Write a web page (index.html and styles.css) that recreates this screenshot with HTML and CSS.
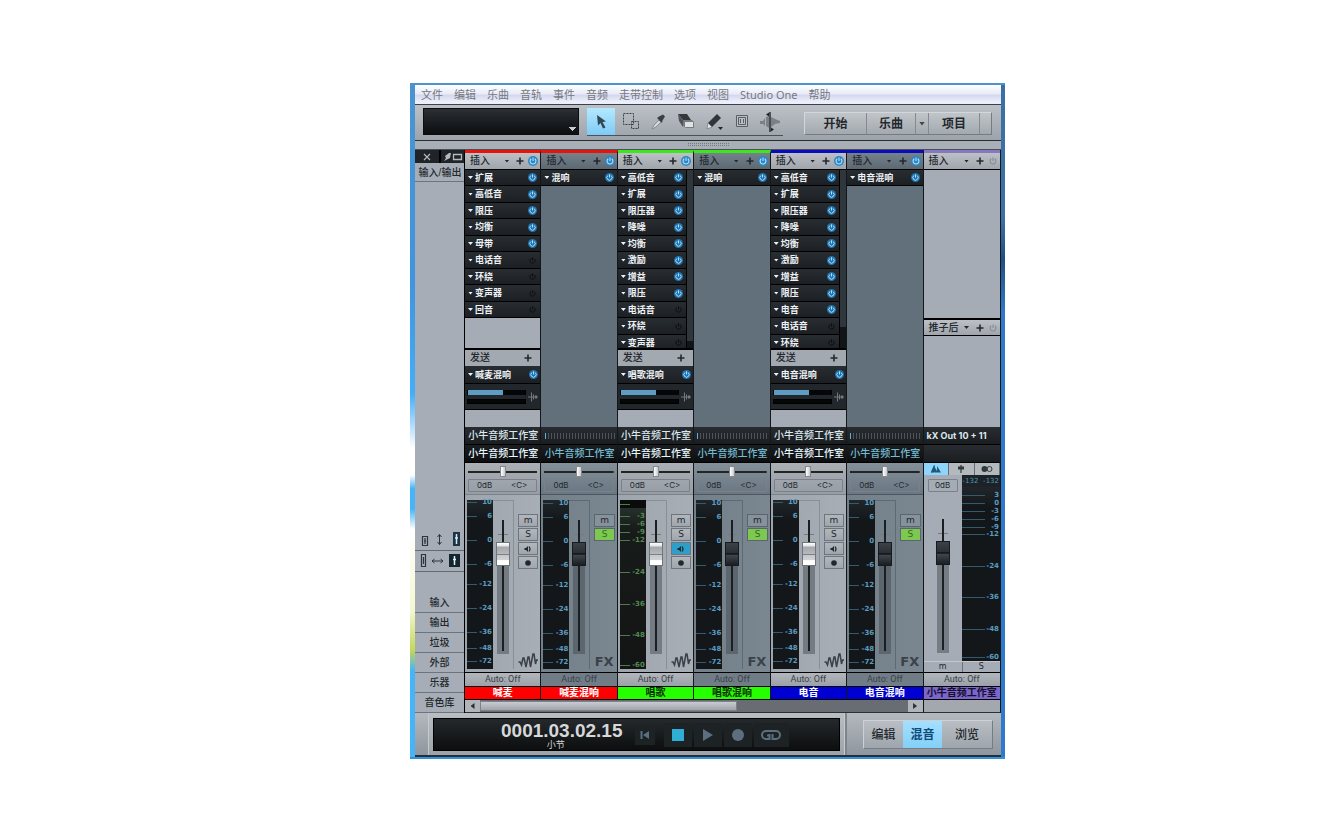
FILE: index.html
```html
<!DOCTYPE html>
<html lang="zh-CN">
<head>
<meta charset="utf-8">
<title>Studio One</title>
<link rel="stylesheet" href="styles.css">
</head>
<body>
<svg class="defs" aria-hidden="true">
  <symbol id="pw" viewBox="0 0 10 10"><path d="M3.200 2.800A2.900 2.900 0 1 0 6.800 2.800M5 1.500v3.500" fill="none" stroke="currentColor" stroke-width="1.100"/></symbol>
  <symbol id="plus" viewBox="0 0 8 8"><path d="M4 0.5v7M0.5 4h7" stroke="currentColor" stroke-width="1.6"/></symbol>
  <symbol id="route" viewBox="0 0 10 10"><path d="M0 5h10M3.500 0.500v9M5.500 2.500v5" stroke="currentColor" fill="none"/><path d="M7 3.500h2v3h-2z" fill="currentColor"/></symbol>
  <symbol id="mon" viewBox="0 0 8 8"><path d="M0.500 3h1.500l2-2v6l-2-2h-1.500z" fill="currentColor"/><path d="M5 1.500q2 2.500 0 5" fill="none" stroke="currentColor" stroke-width="1.200"/></symbol>
  <symbol id="rec" viewBox="0 0 8 8"><circle cx="4" cy="4" r="2.800" fill="currentColor"/></symbol>
  <symbol id="wave" viewBox="0 0 20 16"><path d="M0.500 9h1.500l1.500 3 1.500-7h1l2 9 2-10h1l1.500 10 2.500-13h1l1.500 10 1-4h2" fill="none" stroke="currentColor" stroke-width="1.500"/></symbol>
</svg>
<main class="window">
  <nav class="menu">
    <a href="#">文件</a><a href="#">编辑</a><a href="#">乐曲</a><a href="#">音轨</a><a href="#">事件</a><a href="#">音频</a><a href="#">走带控制</a><a href="#">选项</a><a href="#">视图</a><a href="#">Studio One</a><a href="#">帮助</a>
  </nav>

  <header class="toolbar">
    <select class="display" aria-label="参数"><option></option></select>
    <div class="tools">
      <button class="active" aria-label="箭头"><svg viewBox="0 0 20 20"><path d="M6 3l9 6.500-3.500.5 3 5.500-2.500 1-2.500-5.500-2.500 2.500z" fill="#2f4654"/></svg></button>
      <button aria-label="范围"><svg viewBox="0 0 20 20"><path d="M3.500 1.500h10v11h-10zM11.500 9.500h7v7h-7z" fill="none" stroke="#3c4146" stroke-dasharray="2 1"/></svg></button>
      <button aria-label="分割"><svg viewBox="0 0 20 20"><path d="M4 17l2-4 5-5 2 2-5 5z" fill="#d3d7da" stroke="#777c81" stroke-width=".8"/><path d="M9 6l5 5 .5-2.500 2.500-4-2-2-4 2z" fill="#3b4045"/></svg></button>
      <button aria-label="橡皮擦"><svg viewBox="0 0 20 20"><path d="M2 2h9l4 6H7z" fill="#34383c"/><path d="M2 2l5 6v7L3 9z" fill="#4f5459"/><path d="M7 8h9l2 2v6H10l-3-2z" fill="#777c81"/><path d="M9 10h8v5H9z" fill="#e0e2e4"/></svg></button>
      <button aria-label="绘图"><svg viewBox="0 0 20 20"><path d="M4 11l9-9 4 4-9 9z" fill="#30353a"/><path d="M4 11l4 4-5 2z" fill="#e3e5e7" stroke="#666" stroke-width=".6"/><path d="M14 15h5l-2.500 3z" fill="#22262a"/></svg></button>
      <button aria-label="静音"><svg viewBox="0 0 20 20"><path d="M4.500 3.500h11v11h-11z" fill="#b9bec3" stroke="#5a5f65"/><path d="M6.500 5.500h7v7h-7zM8.500 7v4M11.500 7v4" fill="none" stroke="#5a5f65"/></svg></button>
      <button aria-label="弯曲"><svg viewBox="0 0 20 20"><path d="M0 9h3l2-3v8l-2-2H0zM6 5l3-1v12l-3-2zM11 5l4 2 5 2v2l-5 1-4 3z" fill="#7b8086"/><path d="M10 0v20" stroke="#202428" stroke-width="1.400"/><path d="M6 2.500l3-2v4zM14 17.500l-3-2v4z" fill="#202428"/></svg></button>
    </div>
    <div class="pages">
      <button class="p-start">开始</button><button class="p-song">乐曲</button><button class="p-drop" aria-label="乐曲列表"><i class="tri"></i></button><button class="p-project">项目</button><button class="p-end" aria-label="更多"></button>
    </div>
  </header>
  <div class="splitter"><i></i></div>

  <section class="mixer">
    <aside class="side">
      <div class="side-top">
        <button aria-label="关闭"><svg viewBox="0 0 8 8"><path d="M1 1l6 6M7 1L1 7" stroke="currentColor" stroke-width="1.200"/></svg></button>
        <button aria-label="分离"><svg class="wide" viewBox="0 0 20 10"><path d="M1 9l2-3-1-2 4-3h2l-1 5-2 1z" fill="currentColor"/><path d="M10.500 2.500h8v5h-8z" fill="none" stroke="currentColor" stroke-width="1.300"/></svg></button>
      </div>
      <button class="io">输入/输出</button>
      <div class="side-mid">
        <button aria-label="高度"><svg viewBox="0 0 42 16"><path d="M3.500 4.500h5v9h-5zM6 6v6M5 9h2" fill="none" stroke="#30353a" stroke-width="1.200"/><path d="M20.500 2.500v10M18.500 5l2-2.500 2 2.500M18.500 10l2 2.500 2-2.500" fill="none" stroke="#30353a"/><path d="M34 0h7v14h-7z" fill="#1d3445"/><path d="M37.500 2v10M36 6h3" stroke="#d6eaf5" stroke-width="1.500"/></svg></button>
        <button aria-label="宽度"><svg viewBox="0 0 42 16"><path d="M2.500 1.500h4v12h-4zM4.500 4v7M4 6.500h1" fill="none" stroke="#30353a" stroke-width="1.200"/><path d="M13 8h11M15.500 6L13 8l2.500 2M21.500 6L24 8l-2.500 2" fill="none" stroke="#30353a"/><path d="M30 1h11v13H30z" fill="#13262f"/><path d="M35.500 3v9M34 6.500h3" stroke="#e0f0f5" stroke-width="1.500"/></svg></button>
      </div>
      <div class="side-tabs">
        <button>输入</button><button>输出</button><button>垃圾</button><button>外部</button><button>乐器</button><button>音色库</button>
      </div>
    </aside>

    <div class="rack">
      <article class="ch red">
        <h2 class="head">插入<i class="tri"></i><button aria-label="添加"><svg><use href="#plus"/></svg></button><button class="on" aria-label="旁通"><svg><use href="#pw"/></svg></button></h2>
        <div class="upper">
          <ul class="plugs">
            <li>扩展<button class="on" aria-label="扩展"><svg><use href="#pw"/></svg></button></li>
            <li>高低音<button class="on" aria-label="高低音"><svg><use href="#pw"/></svg></button></li>
            <li>限压<button class="on" aria-label="限压"><svg><use href="#pw"/></svg></button></li>
            <li>均衡<button class="on" aria-label="均衡"><svg><use href="#pw"/></svg></button></li>
            <li>母带<button class="on" aria-label="母带"><svg><use href="#pw"/></svg></button></li>
            <li>电话音<button aria-label="电话音"><svg><use href="#pw"/></svg></button></li>
            <li>环绕<button aria-label="环绕"><svg><use href="#pw"/></svg></button></li>
            <li>变声器<button aria-label="变声器"><svg><use href="#pw"/></svg></button></li>
            <li>回音<button aria-label="回音"><svg><use href="#pw"/></svg></button></li>
          </ul>
        </div>
        <h3 class="send-head">发送<button aria-label="添加发送"><svg><use href="#plus"/></svg></button></h3>
        <ul class="plugs send"><li>喊麦混响<button class="on" aria-label="喊麦混响"><svg><use href="#pw"/></svg></button></li></ul>
        <div class="levels"><div><i class="bar lit"></i><i class="bar"></i></div><svg><use href="#route"/></svg></div>
        <div class="blank"></div>
        <div class="route">小牛音频工作室</div><div class="route black">小牛音频工作室</div>
        <div class="pan"><input type="range" aria-label="声像"><div class="vals"><span>0dB</span><span>&lt;C&gt;</span></div></div>
        <div class="strip">
          <ol class="scale"><li>10</li><li>6</li><li>0</li><li>-6</li><li>-12</li><li>-24</li><li>-36</li><li>-48</li><li>-72</li></ol>
          <div class="lane"><input class="fader" type="range" value="80" aria-label="音量"></div>
          <div class="keys"><button>m</button><button>S</button><button aria-label="监听"><svg><use href="#mon"/></svg></button><button aria-label="录音"><svg><use href="#rec"/></svg></button><svg class="kind"><use href="#wave"/></svg></div>
        </div>
        <div class="auto">Auto: Off</div>
        <div class="name">喊麦</div>
      </article>

      <article class="ch fx red">
        <h2 class="head">插入<i class="tri"></i><button aria-label="添加"><svg><use href="#plus"/></svg></button><button class="on" aria-label="旁通"><svg><use href="#pw"/></svg></button></h2>
        <div class="upper"><ul class="plugs"><li>混响<button class="on" aria-label="混响"><svg><use href="#pw"/></svg></button></li></ul></div>
        <div class="route"><i class="ticks"></i></div><div class="route black">小牛音频工作室</div>
        <div class="pan"><input type="range" aria-label="声像"><div class="vals"><span>0dB</span><span>&lt;C&gt;</span></div></div>
        <div class="strip">
          <ol class="scale"><li>10</li><li>6</li><li>0</li><li>-6</li><li>-12</li><li>-24</li><li>-36</li><li>-48</li><li>-72</li></ol>
          <div class="lane"><input class="fader" type="range" value="80" aria-label="音量"></div>
          <div class="keys"><button>m</button><button class="solo">S</button><b class="kind">FX</b></div>
        </div>
        <div class="auto">Auto: Off</div>
        <div class="name">喊麦混响</div>
      </article>

      <article class="ch green">
        <h2 class="head">插入<i class="tri"></i><button aria-label="添加"><svg><use href="#plus"/></svg></button><button class="on" aria-label="旁通"><svg><use href="#pw"/></svg></button></h2>
        <div class="upper">
          <ul class="plugs">
            <li>高低音<button class="on" aria-label="高低音"><svg><use href="#pw"/></svg></button></li>
            <li>扩展<button class="on" aria-label="扩展"><svg><use href="#pw"/></svg></button></li>
            <li>限压器<button class="on" aria-label="限压器"><svg><use href="#pw"/></svg></button></li>
            <li>降噪<button class="on" aria-label="降噪"><svg><use href="#pw"/></svg></button></li>
            <li>均衡<button class="on" aria-label="均衡"><svg><use href="#pw"/></svg></button></li>
            <li>激励<button class="on" aria-label="激励"><svg><use href="#pw"/></svg></button></li>
            <li>增益<button class="on" aria-label="增益"><svg><use href="#pw"/></svg></button></li>
            <li>限压<button class="on" aria-label="限压"><svg><use href="#pw"/></svg></button></li>
            <li>电话音<button aria-label="电话音"><svg><use href="#pw"/></svg></button></li>
            <li>环绕<button aria-label="环绕"><svg><use href="#pw"/></svg></button></li>
            <li>变声器<button aria-label="变声器"><svg><use href="#pw"/></svg></button></li>
          </ul>
          <div class="vbar"><i class="long"></i></div>
        </div>
        <h3 class="send-head">发送<button aria-label="添加发送"><svg><use href="#plus"/></svg></button></h3>
        <ul class="plugs send"><li>唱歌混响<button class="on" aria-label="唱歌混响"><svg><use href="#pw"/></svg></button></li></ul>
        <div class="levels"><div><i class="bar lit"></i><i class="bar"></i></div><svg><use href="#route"/></svg></div>
        <div class="blank"></div>
        <div class="route">小牛音频工作室</div><div class="route black">小牛音频工作室</div>
        <div class="pan"><input type="range" aria-label="声像"><div class="vals"><span>0dB</span><span>&lt;C&gt;</span></div></div>
        <div class="strip">
          <ol class="scale input"><li></li><li>-3</li><li>-6</li><li>-9</li><li>-12</li><li>-24</li><li>-36</li><li>-48</li><li>-60</li></ol>
          <div class="lane"><input class="fader" type="range" value="80" aria-label="音量"></div>
          <div class="keys"><button>m</button><button>S</button><button class="listen" aria-label="监听"><svg><use href="#mon"/></svg></button><button aria-label="录音"><svg><use href="#rec"/></svg></button><svg class="kind"><use href="#wave"/></svg></div>
        </div>
        <div class="auto">Auto: Off</div>
        <div class="name">唱歌</div>
      </article>

      <article class="ch fx green">
        <h2 class="head">插入<i class="tri"></i><button aria-label="添加"><svg><use href="#plus"/></svg></button><button class="on" aria-label="旁通"><svg><use href="#pw"/></svg></button></h2>
        <div class="upper"><ul class="plugs"><li>混响<button class="on" aria-label="混响"><svg><use href="#pw"/></svg></button></li></ul></div>
        <div class="route"><i class="ticks"></i></div><div class="route black">小牛音频工作室</div>
        <div class="pan"><input type="range" aria-label="声像"><div class="vals"><span>0dB</span><span>&lt;C&gt;</span></div></div>
        <div class="strip">
          <ol class="scale"><li>10</li><li>6</li><li>0</li><li>-6</li><li>-12</li><li>-24</li><li>-36</li><li>-48</li><li>-72</li></ol>
          <div class="lane"><input class="fader" type="range" value="80" aria-label="音量"></div>
          <div class="keys"><button>m</button><button class="solo">S</button><b class="kind">FX</b></div>
        </div>
        <div class="auto">Auto: Off</div>
        <div class="name">唱歌混响</div>
      </article>

      <article class="ch blue">
        <h2 class="head">插入<i class="tri"></i><button aria-label="添加"><svg><use href="#plus"/></svg></button><button class="on" aria-label="旁通"><svg><use href="#pw"/></svg></button></h2>
        <div class="upper">
          <ul class="plugs">
            <li>高低音<button class="on" aria-label="高低音"><svg><use href="#pw"/></svg></button></li>
            <li>扩展<button class="on" aria-label="扩展"><svg><use href="#pw"/></svg></button></li>
            <li>限压器<button class="on" aria-label="限压器"><svg><use href="#pw"/></svg></button></li>
            <li>降噪<button class="on" aria-label="降噪"><svg><use href="#pw"/></svg></button></li>
            <li>均衡<button class="on" aria-label="均衡"><svg><use href="#pw"/></svg></button></li>
            <li>激励<button class="on" aria-label="激励"><svg><use href="#pw"/></svg></button></li>
            <li>增益<button class="on" aria-label="增益"><svg><use href="#pw"/></svg></button></li>
            <li>限压<button class="on" aria-label="限压"><svg><use href="#pw"/></svg></button></li>
            <li>电音<button class="on" aria-label="电音"><svg><use href="#pw"/></svg></button></li>
            <li>电话音<button aria-label="电话音"><svg><use href="#pw"/></svg></button></li>
            <li>环绕<button aria-label="环绕"><svg><use href="#pw"/></svg></button></li>
          </ul>
          <div class="vbar"><i></i></div>
        </div>
        <h3 class="send-head">发送<button aria-label="添加发送"><svg><use href="#plus"/></svg></button></h3>
        <ul class="plugs send"><li>电音混响<button class="on" aria-label="电音混响"><svg><use href="#pw"/></svg></button></li></ul>
        <div class="levels"><div><i class="bar lit"></i><i class="bar"></i></div><svg><use href="#route"/></svg></div>
        <div class="blank"></div>
        <div class="route">小牛音频工作室</div><div class="route black">小牛音频工作室</div>
        <div class="pan"><input type="range" aria-label="声像"><div class="vals"><span>0dB</span><span>&lt;C&gt;</span></div></div>
        <div class="strip">
          <ol class="scale"><li>10</li><li>6</li><li>0</li><li>-6</li><li>-12</li><li>-24</li><li>-36</li><li>-48</li><li>-72</li></ol>
          <div class="lane"><input class="fader" type="range" value="80" aria-label="音量"></div>
          <div class="keys"><button>m</button><button>S</button><button aria-label="监听"><svg><use href="#mon"/></svg></button><button aria-label="录音"><svg><use href="#rec"/></svg></button><svg class="kind"><use href="#wave"/></svg></div>
        </div>
        <div class="auto">Auto: Off</div>
        <div class="name">电音</div>
      </article>

      <article class="ch fx blue">
        <h2 class="head">插入<i class="tri"></i><button aria-label="添加"><svg><use href="#plus"/></svg></button><button class="on" aria-label="旁通"><svg><use href="#pw"/></svg></button></h2>
        <div class="upper"><ul class="plugs"><li>电音混响<button class="on" aria-label="电音混响"><svg><use href="#pw"/></svg></button></li></ul></div>
        <div class="route"><i class="ticks"></i></div><div class="route black">小牛音频工作室</div>
        <div class="pan"><input type="range" aria-label="声像"><div class="vals"><span>0dB</span><span>&lt;C&gt;</span></div></div>
        <div class="strip">
          <ol class="scale"><li>10</li><li>6</li><li>0</li><li>-6</li><li>-12</li><li>-24</li><li>-36</li><li>-48</li><li>-72</li></ol>
          <div class="lane"><input class="fader" type="range" value="80" aria-label="音量"></div>
          <div class="keys"><button>m</button><button class="solo">S</button><b class="kind">FX</b></div>
        </div>
        <div class="auto">Auto: Off</div>
        <div class="name">电音混响</div>
      </article>

      <article class="ch master violet">
        <h2 class="head">插入<i class="tri"></i><button aria-label="添加"><svg><use href="#plus"/></svg></button><button class="off" aria-label="旁通"><svg><use href="#pw"/></svg></button></h2>
        <div class="upper"></div>
        <h2 class="head post">推子后<i class="tri"></i><button aria-label="添加"><svg><use href="#plus"/></svg></button><button class="off" aria-label="旁通"><svg><use href="#pw"/></svg></button></h2>
        <div class="blank"></div>
        <div class="route latin">kX Out 10 + 11</div><div class="route"></div>
        <div class="modes">
          <button class="active" aria-label="节拍器"><svg viewBox="0 0 12 10"><path d="M1 8.500h10L7 2v5L4 2z" fill="#1f5878"/><path d="M1.500 8.500L4.500 1.500" stroke="#1f5878" stroke-width="1.300"/></svg></button>
          <button aria-label="独奏"><svg viewBox="0 0 12 10"><path d="M6 1v8" stroke="#33383d" stroke-width="1.200"/><path d="M3 2.500h6v3H3z" fill="#33383d"/></svg></button>
          <button aria-label="单声道"><svg viewBox="0 0 12 10"><circle cx="3.500" cy="5" r="3" fill="#33383d"/><circle cx="8.500" cy="5" r="2.500" fill="none" stroke="#33383d"/></svg></button>
        </div>
        <div class="out">
          <div class="out-left"><div class="vals"><span>0dB</span></div><input class="fader" type="range" value="80" aria-label="主音量"></div>
          <div class="out-right"><div class="peak"><span>-132</span><span>-132</span></div>
          <ol class="scale main"><li>3</li><li>0</li><li>-3</li><li>-6</li><li>-9</li><li>-12</li><li>-24</li><li>-36</li><li>-48</li><li>-60</li></ol></div>
        </div>
        <div class="ms"><button>m</button><button>S</button></div>
        <div class="auto">Auto: Off</div>
        <div class="name">小牛音频工作室</div>
      </article>

      <div class="hbar"><button class="prev" aria-label="向左"></button><div class="trough"><i></i></div><button class="next" aria-label="向右"></button></div>
      <div class="corner"></div>
    </div>
  </section>

  <footer class="bottom">
    <div class="transport"><div class="lcd">
      <div class="time"><output>0001.03.02.15</output><small>小节</small></div>
      <button class="small" aria-label="返回"><svg viewBox="0 0 12 12"><path d="M2.500 2v8" stroke="currentColor" stroke-width="2"/><path d="M10 2v8L4 6z" fill="currentColor"/></svg></button>
      <button class="stop" aria-label="停止"><svg viewBox="0 0 12 12"><path d="M0 0h12v12H0z" fill="currentColor"/></svg></button>
      <button aria-label="播放"><svg viewBox="0 0 12 12"><path d="M1 0v12l10-6z" fill="currentColor"/></svg></button>
      <button aria-label="录制"><svg viewBox="0 0 12 12"><circle cx="6" cy="6" r="6" fill="currentColor"/></svg></button>
      <button class="loop" aria-label="循环"><svg viewBox="0 0 20 12"><path d="M8.500 5v5H5a4 4 0 0 1 0-8h10a4 4 0 0 1 0 8h-3.500V5M6 6.500h2.500" fill="none" stroke="currentColor" stroke-width="2"/></svg></button>
    </div></div>
    <div class="views"><div><button class="v-edit">编辑</button><button class="v-mix active">混音</button><button class="v-browse">浏览</button></div></div>
  </footer>
</main>
</body>
</html>
```

FILE: styles.css
```css
* { box-sizing: border-box; }
body {
  margin: 0;
  padding-top: 83px;
  background: #fff;
  display: grid;
  grid-template-columns: 410fr 595fr 339fr;
  font: 10px/16px "Liberation Sans", "Noto Sans CJK SC", sans-serif;
  color: #23282d;
}
button, select, input { font: inherit; color: inherit; margin: 0; padding: 0; border: 0; background: none; }
button { display: flex; align-items: center; justify-content: center; }
ul, ol, h2, h3 { margin: 0; padding: 0; list-style: none; font: inherit; }
svg { display: block; }
.defs { display: none; }

.window {
  grid-column: 2;
  min-width: 0;
  padding: 2px 4px 2px 5px;
  background:
    linear-gradient(#4b93cf, #4b93cf) top / 100% 2px no-repeat,
    linear-gradient(#3492dd, #3492dd) bottom / 100% 2px no-repeat,
    linear-gradient(#4b93cf 0, #3f95e0 30%, #45aef8 46%, #fff 54%, #fff 58%, #45b4f8 60%, #45b4f8 63%, #fff 66%, #f4f8d0 78%, #c2d65a 84%, #45b4f8 87%, #45b4f8 100%) left / 5px 100% no-repeat,
    linear-gradient(#3a6fa5 0, #3d70a8 20%, #204f86 26%, #2e79cc 34%, #2e79cc 100%) right / 4px 100% no-repeat;
}

.menu {
  display: flex;
  gap: 11px;
  height: 20px;
  padding-left: 6px;
  align-items: center;
  border-bottom: 1px solid #3c4148;
  background: linear-gradient(#fff, #e9ecf8 45%, #d4d9ee 55%, #eceffb 90%);
  font: 11px/18px "Noto Sans", "Noto Sans CJK SC", sans-serif;
  white-space: nowrap;
}
.menu a { color: #76777d; text-decoration: none; }

.toolbar {
  display: flex;
  height: 36px;
  padding: 3px 9px 4px 8px;
  border-bottom: 1px solid #2a2e33;
  background: linear-gradient(#bcc1c7, #9da3aa);
}
.display {
  appearance: none;
  width: 156px;
  height: 27px;
  border: 1px solid #0c0d0e;
  background:
    conic-gradient(from -45deg at 50% 100%, #c8cdd2 90deg, transparent 0) 145px 18px / 7px 4px no-repeat,
    linear-gradient(#2b2f33, #0c0e10);
}
.tools { display: flex; margin-left: 8px; height: 28px; border-bottom: 1px solid #4c5157; }
.tools button { width: 28px; height: 27px; }
.tools svg { width: 20px; height: 20px; }
.tools button:nth-child(n+2) { padding-left: 2px; }
.tools .active { background: linear-gradient(#b4e8ff, #7fcbf5); }
.pages { display: flex; margin: 4px 0 0 auto; height: 23px; border: 1px solid; border-color: #d3d7db #767b81 #767b81 #d3d7db; background: linear-gradient(#c0c5ca, #a4a9af); font-weight: bold; font-size: 12px; }
.pages button + button { border-left: 1px solid #858a90; }
.p-start { width: 61px; }
.p-song { width: 49px; }
.p-drop { width: 13px; color: #40454b; }
.p-project { width: 51px; }
.p-end { width: 12px; }
.tri { width: 6px; height: 4px; flex: none; background: currentColor; clip-path: polygon(0 0, 100% 0, 50% 100%); }

.splitter { display: flex; height: 9px; align-items: center; justify-content: center; background: #a9afb6; border-bottom: 1px solid #4b5056; }
.splitter i { width: 42px; height: 4px; background: conic-gradient(#5d6268 90deg, transparent 0) 0 0 / 2px 2px; opacity: .7; }

.mixer { display: grid; grid-template-columns: 49px 1fr; border-right: 1px solid #17191c; }
.side { display: flex; flex-direction: column; background: #a6adb6; font-weight: 500; }
.side-top { display: grid; grid-template-columns: 24px 25px; height: 13px; background: #202429; color: #b4b9be; }
.side-top button + button { border-left: 2px solid #000; }
.side-top svg { width: 8px; height: 8px; }
.side-top .wide { width: 20px; height: 10px; }
.io { height: 19px; padding: 1px 0 0 1px; border-bottom: 1px solid #6e747b; white-space: nowrap; }
.side-mid { margin-top: auto; }
.side-mid button { width: 100%; height: 21px; border-bottom: 1px solid #646a71; }
.side-mid svg { width: 42px; height: 16px; }
.side-tabs { margin-top: 21px; }
.side-tabs button { width: 100%; height: 20px; padding-top: 1px; border-bottom: 1px solid #6e747b; }

.rack { display: grid; grid-template-columns: repeat(7, minmax(0, 1fr)); border-left: 1px solid #000; }
.ch { display: flex; flex-direction: column; min-width: 0; border-right: 1px solid #14171a; background: #a5acb5; border-top: 3px solid var(--tint); white-space: nowrap; }
.ch:nth-child(7) { border-right: 0; }
.red { --tint: #e8140c; --plate: #ff0000; --ink: #fff; }
.green { --tint: #3de61e; --plate: #26ff00; --ink: #10300a; }
.blue { --tint: #0a0cb8; --plate: #0000d2; --ink: #fff; }
.violet { --tint: #8478c0; --plate: #7c66cc; --ink: #15102a; }

.head { display: flex; height: 17px; padding: 0 2px 0 5px; align-items: center; border-bottom: 1px solid #000; background: linear-gradient(#bdc1c6, #9fa5ac); font-weight: 500; }
.head .tri { margin-left: auto; width: 5px; height: 3px; }
.head button { margin-left: 7px; }
.head .on, .head .off { margin-left: 4px; }
.head svg, .send-head svg { width: 8px; height: 8px; }
.head .on svg, .head .off svg { width: 10px; height: 10px; }
.head .off { color: #858c94; }
.on { color: #b4e0fa; border-radius: 5px; background: #2a86c4; }
.fx .head { background: linear-gradient(#75818b, #5c6872); }

.upper { display: flex; align-items: flex-start; height: 180px; border-bottom: 2px solid #000; overflow: hidden; }
.fx .upper { height: 257px; border-bottom: 0; background: #62707b; }
.plugs { flex: 1; min-width: 0; color: #eef2f5; font-size: 9px; font-weight: bold; }
.plugs li { display: flex; align-items: center; height: 16px; padding: 0 3px; border-bottom: 1px solid #000; background: linear-gradient(#282d32, #1c2024); }
.plugs li:nth-child(even) { height: 17px; }
.plugs li::before { content: ""; width: 5px; height: 3px; margin-right: 2px; background: currentColor; clip-path: polygon(0 0, 100% 0, 50% 100%); }
.plugs button { margin-left: auto; color: #0b0d0f; }
.plugs .on { color: #b4e0fa; background: #1f74b0; }
.plugs svg { width: 9px; height: 9px; }
.vbar { align-self: stretch; width: 7px; border-left: 1px solid #000; background: #121518; }
.vbar i { display: block; height: 157px; background: #30373c; }
.vbar .long { height: 171px; }
.send-head { display: flex; align-items: center; justify-content: space-between; height: 16px; padding: 0 8px 0 5px; background: #a3a9b0; font-weight: 500; }
.plugs.send { flex: none; }
.send li { height: 18px; padding-right: 2px; }
.levels { display: flex; align-items: center; height: 26px; padding: 0 2px; gap: 2px; background: #22272b; border-bottom: 1px solid #000; color: #737a80; }
.levels div { flex: 1; display: grid; gap: 4px; }
.levels svg { width: 10px; height: 10px; }
.bar { height: 5px; border: 1px solid #000; background: #050607; }
.lit { background: linear-gradient(90deg, #5f9cc4 61%, #050607 61%); border-width: 0 1px; }
.blank { height: 17px; }
.route { display: flex; align-items: center; justify-content: center; height: 18px; padding-left: 1px; border-bottom: 1px solid #000; background: linear-gradient(#282c30, #1b1e21); color: #dce8ee; font-weight: 500; }
.black { background: linear-gradient(#1c1f22, #0c0d0f); color: #e8f8ff; }
.fx .black { color: #74bcd2; }
.latin { justify-content: flex-start; padding-left: 3px; font: bold 9px/17px Inter, sans-serif; }
.ticks { width: 70px; height: 6px; background: linear-gradient(90deg, #58b4dc 1px, transparent 1px), repeating-linear-gradient(90deg, #4e5459 0 1px, transparent 1px 3px); }

.pan { height: 32px; padding: 3px 3px 0; border-bottom: 1px solid #7c8289; background: linear-gradient(#abb0b7, #979da5); }
.fx .pan { background: linear-gradient(#83909a, #6a7782); border-color: #4c5760; }
.pan input { appearance: none; display: block; width: 100%; height: 11px; background: linear-gradient(#222620, #222620) center / 100% 2px no-repeat; }
.pan input::-webkit-slider-thumb { appearance: none; width: 6px; height: 11px; background: linear-gradient(90deg, #fff, #c9ccd0); border: 1px solid #85898e; }
.vals { display: flex; justify-content: space-between; margin-top: 2px; padding: 0 9px 0 8px; height: 13px; border: 1px solid #7b8188; border-radius: 1px; font: 8px/11px Inter, sans-serif; }

.strip { display: flex; height: 178px; padding: 5px 2px 3px; border-bottom: 1px solid #000; background: linear-gradient(90deg, #9ea5ad, #a8aeb6); }
.fx .strip { background: linear-gradient(90deg, #73808a, #7a8791); }
.scale { display: grid; grid-template-rows: 6px 14px 24px 24px 20px 24px 24px 16px 13px; align-items: end; align-content: start; flex: none; width: 26px; background: linear-gradient(#20262a, #14171a 12%, #14171a); color: #5b9cc0; font: bold 7px/8px "DejaVu Sans", sans-serif; }
.scale li { display: flex; justify-content: space-between; align-items: center; height: 8px; padding-right: 1px; }
.scale li::before { content: ""; width: 10px; height: 1px; background: #345a70; }
.fx .scale { padding-top: 1px; }
.scale.input { grid-template-rows: 8px 12px 8px 8px 8px 32px 32px 31px 30px; color: #528a50; background: linear-gradient(#0a0c0c 8px, #26302c 8px, #171b19 30px, #131514); }
.scale.input li::before { background: #4c7a4b; }
.lane { display: flex; justify-content: center; width: 21px; padding-top: 19px; border: 1px solid #888f96; border-width: 1px 1px 0 0; }
.fx .lane { border-color: #5d6973; }
.fader {
  appearance: none;
  writing-mode: vertical-lr;
  direction: rtl;
  width: 14px;
  height: 134px;
  background:
    linear-gradient(#1c1f22, #1c1f22) center 0 / 2px 131px no-repeat,
    linear-gradient(#747a80, #747a80) center 14px / 10px 1px no-repeat,
    linear-gradient(rgb(60 66 72 / 45%), rgb(60 66 72 / 45%)) center bottom / 12px 92px no-repeat;
}
.fader::-webkit-slider-thumb { appearance: none; width: 14px; height: 24px; border: 1px solid #70757a; background: linear-gradient(#fff 0, #e4e6e8 12%, #a5a8ac 20%, #b5b8bc 48%, #4e5257 50%, #c6c9cc 56%, #d0d2d5 75%, #fff 80%); }
.fx .fader::-webkit-slider-thumb, .master .fader::-webkit-slider-thumb { border-color: #171b1f; background: linear-gradient(#3b4248 0, #2b3035 44%, #0b0d0f 50%, #3e454b 56%, #1b1f22); }
.keys { display: flex; flex-direction: column; flex: 1; gap: 1px; padding: 14px 0 0 4px; }
.keys button { height: 13px; border: 1px solid #6f757c; background: linear-gradient(#b2b7bd, #a0a6ad); font: 9px/11px "DejaVu Sans", sans-serif; }
.fx .keys button { background: #85919b; border-color: #5a656e; }
.fx .keys .solo { background: #7cc850; color: #2f6d1c; }
.keys .listen { background: #2d9fc8; }
.keys button svg { width: 8px; height: 8px; }
.kind { margin-top: auto; width: 20px; height: 16px; color: #3a4148; font: bold 13px/16px "DejaVu Sans", sans-serif; }
.fx .kind { align-self: center; margin-bottom: -1px; }

.auto { height: 14px; border-bottom: 1px solid #000; text-align: center; background: linear-gradient(#b2b7bd, #9ba1a8); font: 9px/13px Roboto, sans-serif; color: #3a4047; }
.fx .auto { background: #707d87; }
.name { height: 13px; border-bottom: 1px solid #000; text-align: center; background: var(--plate); color: var(--ink); font-weight: bold; line-height: 12px; }

.master .upper { height: 150px; }
.post { height: 16px; }
.master .blank { flex: 1; }
.master .vals { margin: 4px 4px 0; }
.modes { display: grid; grid-template-columns: repeat(3, 1fr); height: 12px; }
.modes button { border-right: 1px solid #666c72; background: #b4b9be; }
.modes .active { background: #8fd4fa; }
.modes svg { width: 12px; height: 10px; }
.out { display: grid; grid-template-columns: 38px 1fr; height: 186px; }
.out-left { display: flex; flex-direction: column; align-items: center; }
.out-left .fader { margin-top: 27px; height: 134px; }
.out-left .vals { align-self: stretch; justify-content: center; padding: 0; }
.out-right { background: #15181b; }
.peak { display: flex; justify-content: space-between; height: 12px; padding: 0 1px; background: #1d2226; color: #4e94b8; font: 7px/12px "DejaVu Sans", sans-serif; }
.scale.main { width: auto; grid-template-rows: 12px 8px 8px 8px 8px 7px 32px 31px 32px 28px; }
.scale.main li::before { width: 23px; }
.ms { display: grid; grid-template-columns: 1fr 1fr; height: 12px; border-bottom: 1px solid #000; border-top: 1px solid #c4c8cc; font: 8px/10px "DejaVu Sans", sans-serif; }
.ms button + button { border-left: 1px solid #6c7278; }

.hbar { grid-column: 1 / span 6; display: flex; height: 13px; border-bottom: 1px solid #2b2f33; border-right: 1px solid #14171a; background: #b0b5ba; }
.hbar button { width: 15px; }
.hbar button::before { content: ""; width: 4px; height: 6px; background: #2c3136; }
.prev::before { clip-path: polygon(100% 0, 100% 100%, 0 50%); }
.next::before { clip-path: polygon(0 0, 100% 50%, 0 100%); }
.trough { flex: 1; padding: 1px 0; background: #686d74; }
.trough i { display: block; width: 60%; height: 10px; border: 1px solid #7c8288; background: linear-gradient(#c8ccd2, #a0a5ab); }
.corner { background: #a2a8ae; border-bottom: 1px solid #2b2f33; }

.bottom { display: flex; height: 44px; border-bottom: 2px solid #22303c; background: linear-gradient(#b4b9bf, #90969e); }
.transport { flex: 1; margin-left: 13px; padding: 5px 4px; border: 1px solid #c6cace; border-width: 0 1px; background: linear-gradient(#b9bec3, #9da3a9); }
.lcd { display: flex; align-items: center; height: 33px; padding-left: 67px; border: 1px solid #000; background: linear-gradient(#25292c, #0c0e0f); color: #5c6f7e; }
.time { display: flex; flex-direction: column; align-items: center; margin-right: 12px; color: #d6d8da; }
.time output { font: bold 19px/21px "Liberation Sans", sans-serif; }
.time small { font-size: 9px; line-height: 9px; margin-right: 12px; }
.lcd button { width: 28px; height: 24px; margin-right: 2px; background: #1d2225; }
.lcd .small { width: 20px; height: 20px; margin-right: 9px; }
.lcd .loop { width: 35px; }
.lcd svg { width: 12px; height: 12px; }
.lcd .loop svg { width: 20px; height: 12px; }
.lcd .stop { color: #2fafd6; }
.views { width: 156px; padding: 7px 8px 0 16px; border-left: 2px solid #7e848b; }
.views div { display: flex; height: 29px; border: 1px solid; border-color: #cdd1d5 #767c83 #767c83 #cdd1d5; background: linear-gradient(#b9bec4, #9fa5ac); font-size: 12px; font-weight: 500; }
.v-edit, .v-mix { width: 39px; }
.v-browse { flex: 1; }
.views .active { background: linear-gradient(#a4e0ff, #84cff8); color: #0f4a78; font-weight: bold; }
```
